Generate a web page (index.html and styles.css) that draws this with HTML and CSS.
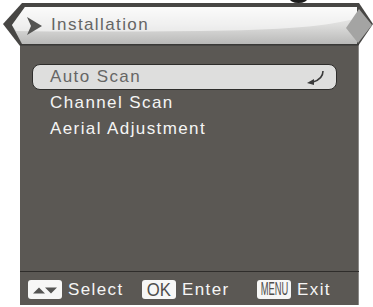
FILE: index.html
```html
<!DOCTYPE html>
<html>
<head>
<meta charset="utf-8">
<link rel="stylesheet" href="styles.css">
</head>
<body>
<div class="screen">
  <div class="blob"></div>
  <div class="header">
    <svg class="header-bg" width="373" height="46" viewBox="0 0 373 46">
      <defs>
        <linearGradient id="hg" x1="0" y1="0" x2="0" y2="1">
          <stop offset="0" stop-color="#f6f6f5"/>
          <stop offset="0.5" stop-color="#dcdcdb"/>
          <stop offset="1" stop-color="#b9b9b8"/>
        </linearGradient>
      </defs>
      <polygon points="22,3 359,3 373,24 358,46 20,46 3,24" fill="#474644"/>
      <polygon points="25,7 357,7 357,44 22,44 12,25" fill="url(#hg)"/>
      <path d="M25 7 H357 V18 Q320 30 200 31 Q80 32 16 31 L12 25 Z" fill="#ffffff" opacity="0.55"/>
      <polygon points="359,9 372,25 358,43 346,28" fill="#a4a4a3"/>
      <line x1="20" y1="44.5" x2="359" y2="44.5" stroke="#3a3937" stroke-width="1"/>
    </svg>
    <svg class="title-arrow" width="16" height="18" viewBox="0 0 16 18">
      <polygon points="0,0 15,9 0,18 4,9" fill="#555553"/>
    </svg>
    <span class="title">Installation</span>
  </div>
  <div class="panel">
    <div class="menu">
      <div class="item selected">
        <span>Auto Scan</span>
        <svg class="enter-icon" width="20" height="16" viewBox="0 0 20 16">
          <path d="M17 1 Q17 9 7 12" fill="none" stroke="#3a3a3a" stroke-width="1.6"/>
          <polygon points="1,13 8,9 8,15" fill="#3a3a3a"/>
        </svg>
      </div>
      <div class="item">Channel Scan</div>
      <div class="item">Aerial Adjustment</div>
    </div>
    <div class="footer">
      <div class="hint">
        <span class="key key-arrows">
          <svg width="24" height="7" viewBox="0 0 24 7">
            <polygon points="0,6.5 6,0.5 12,6.5" fill="#555553"/>
            <polygon points="12,0.5 24,0.5 18,6.5" fill="#555553"/>
          </svg>
        </span>
        <span>Select</span>
      </div>
      <div class="hint">
        <span class="key"><span class="key-ok">OK</span></span>
        <span>Enter</span>
      </div>
      <div class="hint">
        <span class="key"><span class="key-menu">MENU</span></span>
        <span>Exit</span>
      </div>
    </div>
  </div>
</div>
</body>
</html>
```

FILE: styles.css
```css
html, body {
  margin: 0;
  padding: 0;
  background: #ffffff;
}
.screen {
  position: relative;
  width: 373px;
  height: 307px;
  overflow: hidden;
  font-family: "Liberation Sans", Arial, sans-serif;
}
.blob {
  position: absolute;
  left: 289px;
  top: -8px;
  width: 19px;
  height: 11px;
  border-radius: 50%;
  background: #1c1c1c;
}
.header {
  position: relative;
  height: 45px;
  display: flex;
  align-items: flex-start;
  padding: 15px 0 0 27px;
  box-sizing: border-box;
}
.header-bg {
  position: absolute;
  left: 0;
  top: 0;
}
.title-arrow {
  position: relative;
  margin-top: 2px;
  margin-right: 8px;
}
.title {
  position: relative;
  font-size: 17px;
  line-height: 20px;
  letter-spacing: 1.4px;
  color: #656564;
}
.panel {
  margin-left: 20px;
  width: 339px;
  height: 260px;
  background: #5b5854;
  display: flex;
  flex-direction: column;
  box-shadow: inset -1px 0 0 #8c8a88;
}
.menu {
  flex: 1;
  padding: 19px 0 0 12px;
}
.item {
  width: 305px;
  height: 25.5px;
  box-sizing: border-box;
  padding-left: 18px;
  font-size: 17px;
  line-height: 25.5px;
  letter-spacing: 1.4px;
  color: #f5f5f4;
  display: flex;
  align-items: center;
  justify-content: space-between;
}
.item.selected {
  height: 26px;
  line-height: 24px;
  background: #dededd;
  border: 1px solid #2e2d2b;
  border-radius: 8px;
  color: #666665;
  padding-left: 17px;
  padding-right: 10px;
}
.enter-icon {
  margin-top: 2px;
}
.footer {
  height: 34px;
  border-top: 1px solid #2f2d2b;
  box-sizing: border-box;
  display: grid;
  grid-template-columns: 114px 115px auto;
  align-items: center;
  padding-left: 8px;
  padding-top: 2px;
}
.hint {
  display: flex;
  align-items: center;
  font-size: 17px;
  letter-spacing: 1.4px;
  color: #f5f5f4;
}
.key {
  width: 34px;
  height: 19px;
  background: #f7f7f6;
  border-radius: 3px;
  margin-right: 6px;
  display: flex;
  align-items: center;
  justify-content: center;
  letter-spacing: 0;
}
.key-arrows svg {
  display: block;
  margin-top: 1px;
}
.key-ok {
  font-size: 19px;
  line-height: 19px;
  color: #4f4e4c;
  transform: scaleX(0.88);
}
.key-menu {
  font-size: 18px;
  line-height: 19px;
  color: #4f4e4c;
  transform: scaleX(0.52);
  letter-spacing: 0;
}
```
